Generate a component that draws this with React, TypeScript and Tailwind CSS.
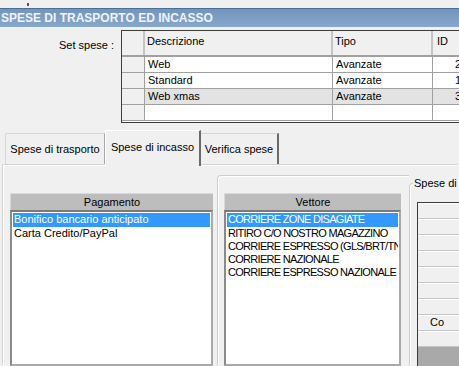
import React from "react";

// Finestra "Spese di trasporto ed incasso" — riproduzione stile WinForms classico

const SET_ROWS = [
  { desc: "Web", tipo: "Avanzate", id: "2", sel: false },
  { desc: "Standard", tipo: "Avanzate", id: "1", sel: false },
  { desc: "Web xmas", tipo: "Avanzate", id: "3", sel: true },
  { desc: "", tipo: "", id: "", sel: false },
];

const PAGAMENTI = ["Bonifico bancario anticipato", "Carta Credito/PayPal"];

const VETTORI = [
  "CORRIERE ZONE DISAGIATE",
  "RITIRO C/O NOSTRO MAGAZZINO",
  "CORRIERE ESPRESSO (GLS/BRT/TNT)",
  "CORRIERE NAZIONALE",
  "CORRIERE ESPRESSO NAZIONALE",
];

function ListPanel({
  title,
  items,
  width,
  caps,
}: {
  title: string;
  items: string[];
  width: string;
  caps?: boolean;
}) {
  return (
    <div className={`${width} flex flex-col shrink-0 h-full`}>
      <div className="h-[17px] bg-[#bdbdbd] border-t border-l border-[#d8d8d8] text-center leading-[16px]">
        {title}
      </div>
      <div className="flex-1 bg-white border-2 border-[#a9a9a9] border-t-[#7a7a7a] border-l-[#8a8a8a] px-[1px] pt-[1px] overflow-hidden">
        {items.map((it, i) => (
          <div
            key={it}
            className={`leading-[13px] pl-[1px] whitespace-nowrap overflow-hidden ${
              caps ? "tracking-[-0.7px]" : ""
            } ${i === 0 ? "h-[14px] bg-[#3399ff] text-white" : "h-[13px]"}`}
          >
            {it}
          </div>
        ))}
      </div>
    </div>
  );
}

export default function App() {
  return (
    <div className="w-[459px] h-[366px] overflow-hidden bg-[#f0f0f0] font-['Liberation_Sans',Arial,sans-serif] text-[11px] text-black flex flex-col">
      {/* striscia superiore */}
      <div className="h-[8px] shrink-0 relative">
        <div className="absolute left-[27px] top-[3px] w-[2px] h-[3px] bg-[#555]" />
      </div>

      {/* barra titolo */}
      <div className="h-[19px] shrink-0 border-t border-[#4d6d94] bg-gradient-to-b from-[#7394bc] to-[#88a7cc] text-[#eef3f9] font-bold text-[12px] leading-[18px] pl-[1px] whitespace-nowrap">
        SPESE DI TRASPORTO ED INCASSO
      </div>

      {/* set spese */}
      <div className="h-[103px] shrink-0 flex pt-[3px]">
        <div className="w-[121px] shrink-0 text-right pr-[7px] pt-[7px]">Set spese :</div>
        <div className="h-[93px] w-[345px] shrink-0 border border-[#3c3c3c] bg-white flex flex-col">
          <div className="h-[26px] flex bg-[#f0f0f0] border-b-2 border-[#a0a0a0]">
            <div className="w-[23px] border-r-2 border-[#c4c4c4]" />
            <div className="w-[188px] border-r-2 border-[#c4c4c4] pl-[2px] pt-[2px]">Descrizione</div>
            <div className="w-[100px] border-r-2 border-[#c4c4c4] pl-[2px] pt-[2px]">Tipo</div>
            <div className="flex-1 pl-[4px] pt-[2px]">ID</div>
          </div>
          {SET_ROWS.map((r, i) => (
            <div key={i} className="h-[16px] flex">
              <div className="w-[23px] bg-[#f0f0f0] border-r border-b border-[#a0a0a0]" />
              <div
                className={`w-[188px] border-r border-b border-[#a0a0a0] pl-[3px] leading-[15px] ${
                  r.sel ? "bg-[#e3e3e3]" : ""
                }`}
              >
                {r.desc}
              </div>
              <div
                className={`w-[100px] border-r border-b border-[#a0a0a0] pl-[3px] leading-[15px] ${
                  r.sel ? "bg-[#e3e3e3]" : ""
                }`}
              >
                {r.tipo}
              </div>
              <div className={`flex-1 border-b border-[#a0a0a0] pl-[22px] leading-[15px] ${r.sel ? "bg-[#e3e3e3]" : ""}`}>
                {r.id}
              </div>
            </div>
          ))}
        </div>
      </div>

      {/* tab strip */}
      <div className="h-[35px] shrink-0 flex items-end pl-[5px]">
        <div className="w-[100px] h-[32px] border-t border-l border-[#d6d6d6] border-r border-r-[#a8a8a8] flex items-center justify-center rounded-tl-[2px]">
          Spese di trasporto
        </div>
        <div className="w-[96px] h-[36px] -mb-[1px] relative z-10 bg-[#f0f0f0] border-t border-l border-white border-r-2 border-r-[#6a6a6a] flex items-center justify-center pb-[2px]">
          Spese di incasso
        </div>
        <div className="w-[78px] h-[32px] border-t border-[#d6d6d6] border-r-2 border-r-[#6a6a6a] flex items-center justify-center">
          Verifica spese
        </div>
      </div>

      {/* pagina tab */}
      <div className="flex-1 ml-[3px] border-t border-l border-white shadow-[-1px_-1px_0_#d4d4d4] flex overflow-hidden">
        <div className="pl-[6px] pt-[27px] h-full flex shrink-0">
          <ListPanel title="Pagamento" items={PAGAMENTI} width="w-[203px]" />
        </div>

        <div className="ml-[4px] mt-[9px] w-[192px] shrink-0 border-t border-l border-[#c9ced4] rounded-tl-[4px] shadow-[inset_1px_1px_0_#ffffff] pl-[6px] pt-[17px] flex">
          <ListPanel title="Vettore" items={VETTORI} width="w-[177px]" caps />
        </div>

        <div className="mt-[17px] flex-1 border-t border-l border-[#c9ced4] rounded-tl-[4px] shadow-[inset_1px_1px_0_#ffffff] relative pl-[7px] pt-[18px] flex">
          <div className="absolute -top-[8px] left-[3px] bg-[#f0f0f0] px-[1px] whitespace-nowrap leading-[14px]">
            Spese di incasso
          </div>
          <div className="flex-1 border-t border-l border-[#3a3a3a] bg-[#f0f0f0] flex flex-col">
            {Array.from({ length: 9 }).map((_, i) => (
              <div
                key={i}
                className="h-[16px] shrink-0 border-b border-[#c6c6c6] shadow-[inset_0_1px_0_#ffffff] leading-[15px] whitespace-nowrap"
              >
                {i === 7 && <div className="w-[26px] overflow-hidden pl-[12px]">Contrassegno</div>}
              </div>
            ))}
            <div className="flex-1 bg-[#a9a9a9]" />
          </div>
        </div>
      </div>
    </div>
  );
}
